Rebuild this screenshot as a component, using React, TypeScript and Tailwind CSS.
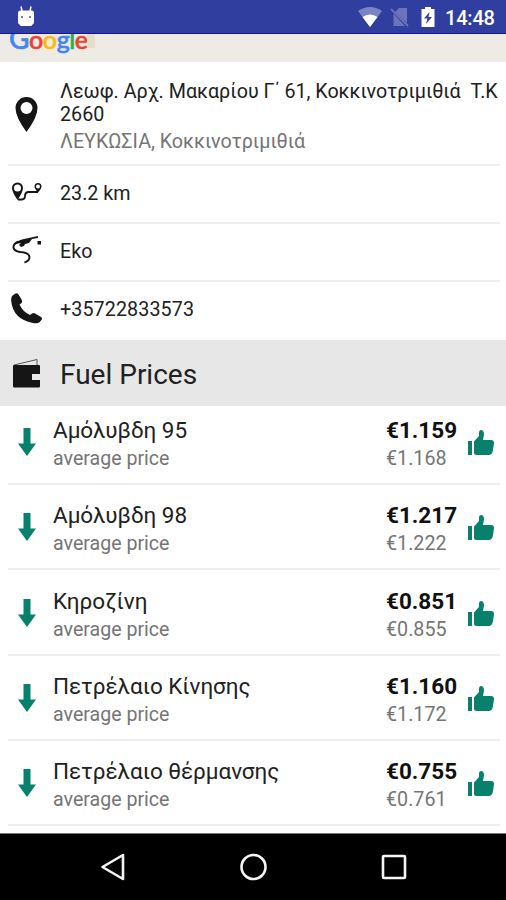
import type { ReactNode } from "react";

const fuels = [
  { name: "Αμόλυβδη 95", price: "€1.159", average: "€1.168", height: "h-[79px]" },
  { name: "Αμόλυβδη 98", price: "€1.217", average: "€1.222", height: "h-[85px]" },
  { name: "Κηροζίνη", price: "€0.851", average: "€0.855", height: "h-[86px]" },
  { name: "Πετρέλαιο Κίνησης", price: "€1.160", average: "€1.172", height: "h-[85px]" },
  { name: "Πετρέλαιο θέρμανσης", price: "€0.755", average: "€0.761", height: "h-[85px]" },
];

function StatusBar() {
  return (
    <header className="flex h-[34px] shrink-0 items-center border-b border-[#1414a0] bg-[#303f9f] pl-[17px] pr-[11px] text-white">
      <svg className="-mt-[2px]" width="18" height="22" viewBox="0 0 18 22" fill="#fff">
        <path d="M4 1.500 5 6M14 1.500 13 6" stroke="#fff" strokeWidth="1.500" />
        <path d="M1 8q0-2.500 2.500-2.500h11Q17 5.500 17 8v9q0 2-1.500 2.500Q15 21 13.500 21h-9Q3 21 2.500 19.500 1 19 1 17z" />
        <circle cx="5" cy="12" r=".9" fill="#303f9f" />
        <circle cx="13" cy="12" r=".9" fill="#303f9f" />
      </svg>
      <div className="ml-auto flex items-center">
        <svg width="26" height="22" viewBox="0 0 26 22">
          <path d="M1 5Q13-3 25 5L13 21z" fill="#7a84c3" />
          <path d="M5.500 11Q13 6 20.500 11L13 21z" fill="#fff" />
        </svg>
        <svg className="ml-[7px]" width="20" height="22" viewBox="0 0 20 22">
          <path d="M9 2h8v15L5 6zM3.500 7.500 15 20H3.500z" fill="#6974ba" />
          <path d="M1 3l17 17" stroke="#6974ba" strokeWidth="1.800" />
        </svg>
        <svg className="ml-[10px]" width="16" height="22" viewBox="0 0 16 22">
          <path d="M5 1h6v2h3.500v18h-13V3H5z" fill="#fff" />
          <path d="M9.500 6 4 12.500h3.500L6 18l6-7H8.500z" fill="#303f9f" />
        </svg>
        <span className="ml-[9px] mt-[2px] w-[50px] whitespace-nowrap text-[20px] font-medium leading-none tracking-[-0.200px]">14:48</span>
      </div>
    </header>
  );
}

function InfoRow({ icon, children, className }: { icon: ReactNode; children: ReactNode; className: string }) {
  return (
    <div className={`flex shrink-0 items-center px-2 ${className}`}>
      <div className="flex w-[52px] shrink-0 items-center">{icon}</div>
      <div className="whitespace-nowrap text-[19.700px] leading-[23px] text-[#212121]">{children}</div>
    </div>
  );
}

function Divider() {
  return <div className="ml-2 mr-[6px] h-[2px] shrink-0 bg-[#eeeeee]" />;
}

function DownArrow() {
  return (
    <svg width="18" height="28" viewBox="0 0 18 28" fill="#07806c">
      <path d="M5.500 0h7v15.500H18L9 28 0 15.500h5.500z" />
    </svg>
  );
}

function ThumbUp() {
  return (
    <svg width="28" height="28" viewBox="0 0 28 28" fill="#07806c">
      <path d="M1 12h4v14H1zM7 12.500 12 7V3.500Q12 1 14 1q3 0 3 4.500L16 11h8q3 0 3 3l-1 7q-.5 5-4.500 5H9.500Q7 26 7 24z" />
    </svg>
  );
}

export default function App() {
  return (
    <div className="flex h-[900px] w-[506px] flex-col overflow-hidden bg-white font-[Roboto,'Noto_Sans',sans-serif]">
      <StatusBar />
      <div className="flex h-[28px] shrink-0 items-start overflow-hidden bg-[#eeebe4] pl-[9px]">
        <div className="-mt-[12px] w-[78px] whitespace-nowrap font-[Lato,sans-serif] text-[25px] font-medium leading-[32px] tracking-[-0.400px] [-webkit-text-stroke:0.6px_currentColor]">
          <span className="text-[28px] text-[#4285f4]">G</span>
          <span className="text-[#ea4335]">o</span>
          <span className="text-[#fbbc05]">o</span>
          <span className="text-[#4285f4]">g</span>
          <span className="text-[#34a853]">l</span>
          <span className="text-[#ea4335]">e</span>
        </div>
        <div className="h-[14px] w-[8px] bg-[#e6dfc7]" />
      </div>

      <InfoRow
        className="h-[102px]"
        icon={
          <svg className="ml-[7px] mt-[2px]" width="23" height="35" viewBox="0 0 23 35">
            <path fillRule="evenodd" fill="#151515" d="M11.500 0a11 11 0 0 1 11 11q0 9-11 24Q.5 20 .5 11a11 11 0 0 1 11-11m0 5a6 6 0 1 0 0 12 6 6 0 0 0 0-12" />
          </svg>
        }
      >
        <p className="mt-[6px]">Λεωφ. Αρχ. Μακαρίου Γ΄ 61, Κοκκινοτριμιθιά&nbsp; Τ.Κ</p>
        <p>2660</p>
        <p className="mt-1 text-[#757575]">ΛΕΥΚΩΣΙΑ, Κοκκινοτριμιθιά</p>
      </InfoRow>
      <Divider />
      <InfoRow
        className="h-[56px] pb-[2px]"
        icon={
          <svg className="-mt-[2px] ml-[3px]" width="32" height="22" viewBox="0 0 32 22">
            <path fillRule="evenodd" fill="#151515" d="M6.500 1.500a5.500 5.500 0 0 1 5.500 5.500q0 4-5.500 12Q1 11 1 7a5.500 5.500 0 0 1 5.500-5.500m0 2a3.500 3.500 0 1 0 0 7 3.500 3.500 0 0 0 0-7M27 2a3.500 3.500 0 0 1 3.500 3.500q0 2-3.500 6-3.500-4-3.500-6A3.500 3.500 0 0 1 27 2m0 1.500a2 2 0 1 0 0 4 2 2 0 0 0 0-4" />
            <path d="M7 18.500h4q3 0 3-3.500t3-4h10" fill="none" stroke="#151515" strokeWidth="1.800" />
          </svg>
        }
      >
        23.2 km
      </InfoRow>
      <Divider />
      <InfoRow
        className="h-[56px] pb-[2px]"
        icon={
          <svg className="-mt-[2px] ml-[4px]" width="30" height="30" viewBox="0 0 30 30" fill="#151515">
            <path d="M1 12Q4 5 12 4L19 2.500 26 1v2l-6 1-3 4-4 1-1 2-3 1-2-2 2-2-5 1z" />
            <path d="M6 6.500Q1 9 1.500 12.500T8 17q9 .5 9.500 5 0 4-5 5.500" fill="none" stroke="#151515" strokeWidth="1.900" />
            <path d="M25.500 6h3.500v3.500h-3.500z" />
          </svg>
        }
      >
        Eko
      </InfoRow>
      <Divider />
      <InfoRow
        className="h-[58px] pb-[4px]"
        icon={
          <svg className="ml-[3px]" width="32" height="32" viewBox="0 0 32 32" fill="#151515">
            <path d="M1 3 4 .8q2-1.200 3.500.7l3 5q1.500 2.500-.5 4l-1.500 1q3.500 7.500 10.500 10.500l2-1.500q1.500-1 3 0l6 3.500q1.500 1 .8 2.500l-2 2.500q-2 2-7 1Q2 26 .2 8 0 5 1 3" />
          </svg>
        }
      >
        <span className="tracking-[0.100px]">+35722833573</span>
      </InfoRow>

      <div className="flex h-[66px] shrink-0 items-center bg-[#e7e7e7] px-2 pt-[4px]">
        <div className="w-[52px] pl-[5px]">
          <svg className="-mt-[5px]" width="28" height="30" viewBox="0 0 28 30">
            <path d="M1 7 24 1.500V7" fill="none" stroke="#555" strokeWidth="1" />
            <path d="M0 8q0-1 1-1h25q1 0 1 1v8h-8v6h8v6q0 1.500-1 1.500H1q-1 0-1-1.500z" fill="#151515" />
            <rect x="19" y="17" width="7" height="4" rx="1" fill="#e7e7e7" />
          </svg>
        </div>
        <h2 className="whitespace-nowrap text-[28px] leading-[34px] text-[#212121]">Fuel Prices</h2>
      </div>

      <main className="flex flex-1 flex-col overflow-hidden">
        {fuels.map((fuel) => (
          <section key={fuel.name} className={`ml-2 mr-[6px] flex shrink-0 items-end border-b-2 border-[#eeeeee] ${fuel.height}`}>
            <div className="w-[45px] pb-[27px] pl-[10px]"><DownArrow /></div>
            <div className="flex-1 pb-[10px] whitespace-nowrap">
              <div className="text-[22.500px] leading-[28px] tracking-[-0.050px] text-[#212121]">{fuel.name}</div>
              <div className="text-[19.600px] leading-[29px] text-[#757575]">average price</div>
            </div>
            <div className="w-[81px] pb-[10px] whitespace-nowrap">
              <div className="text-[22.500px] font-bold leading-[28px] text-[#111111]">{fuel.price}</div>
              <div className="text-[19.700px] leading-[29px] text-[#757575]">{fuel.average}</div>
            </div>
            <div className="w-[33px] pb-[26px]"><ThumbUp /></div>
          </section>
        ))}
      </main>

      <nav className="flex h-[67px] shrink-0 items-center border-t border-[#777777] bg-black pl-[99px]">
        <svg width="28" height="30" viewBox="0 0 28 30" fill="none" stroke="#f5f5f5" strokeWidth="2.600">
          <path d="M24 3v24L3.500 15z" strokeLinejoin="round" />
        </svg>
        <svg className="ml-[111px]" width="30" height="30" viewBox="0 0 30 30" fill="none" stroke="#f5f5f5" strokeWidth="2.600">
          <circle cx="15.500" cy="15" r="12" />
        </svg>
        <svg className="ml-[111px]" width="30" height="30" viewBox="0 0 30 30" fill="none" stroke="#f5f5f5" strokeWidth="2.600">
          <rect x="4" y="4" width="22" height="22" rx="1" />
        </svg>
      </nav>
    </div>
  );
}
